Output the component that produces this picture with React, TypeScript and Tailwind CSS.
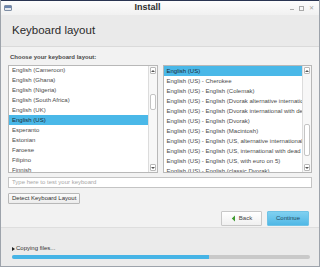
import React from "react";

const leftItems = [
  "English (Cameroon)",
  "English (Ghana)",
  "English (Nigeria)",
  "English (South Africa)",
  "English (UK)",
  "English (US)",
  "Esperanto",
  "Estonian",
  "Faroese",
  "Filipino",
  "Finnish",
];

const rightItems = [
  "English (US)",
  "English (US) - Cherokee",
  "English (US) - English (Colemak)",
  "English (US) - English (Dvorak alternative international no dead keys)",
  "English (US) - English (Dvorak international with dead keys)",
  "English (US) - English (Dvorak)",
  "English (US) - English (Macintosh)",
  "English (US) - English (US, alternative international)",
  "English (US) - English (US, international with dead keys)",
  "English (US) - English (US, with euro on 5)",
  "English (US) - English (classic Dvorak)",
];

function ScrollBar({ thumbTop, thumbHeight }: { thumbTop: number; thumbHeight: number }) {
  return (
    <div className="relative w-[9px] shrink-0 border-l border-[#dcdcdc] bg-[#f7f7f7]">
      {/* up arrow */}
      <div className="absolute left-[1px] top-[1px] flex h-[7px] w-[6px] items-center justify-center rounded-[1px] border border-[#b9b9b9] bg-white">
        <div className="h-0 w-0 border-x-[2px] border-b-[2px] border-x-transparent border-b-[#555]" />
      </div>
      {/* thumb */}
      <div
        className="absolute left-[1px] w-[6px] rounded-[2px] border border-[#c4c4c4] bg-white"
        style={{ top: thumbTop, height: thumbHeight }}
      />
      {/* down arrow */}
      <div className="absolute bottom-[1px] left-[1px] flex h-[7px] w-[6px] items-center justify-center rounded-[1px] border border-[#b9b9b9] bg-white">
        <div className="h-0 w-0 border-x-[2px] border-t-[2px] border-x-transparent border-t-[#555]" />
      </div>
    </div>
  );
}

function LayoutList({
  items,
  selected,
  offset,
  thumbTop,
  thumbHeight,
}: {
  items: string[];
  selected: number;
  offset: number;
  thumbTop: number;
  thumbHeight: number;
}) {
  return (
    <div className="flex h-[108px] w-[150px] overflow-hidden border border-[#b8b8b8] bg-white">
      <div className="min-w-0 flex-1 overflow-hidden">
        <div style={{ marginTop: offset }}>
          {items.map((item, i) => (
            <div
              key={item}
              className={
                i === selected
                  ? "flex h-[10px] items-center whitespace-nowrap bg-[#4ab8e8] pl-[3px] text-[#1d2a33]"
                  : "flex h-[10px] items-center whitespace-nowrap pl-[3px] text-[#4a4a4a]"
              }
            >
              {item}
            </div>
          ))}
        </div>
      </div>
      <ScrollBar thumbTop={thumbTop} thumbHeight={thumbHeight} />
    </div>
  );
}

export default function App() {
  return (
    <div
      className="flex h-[267px] w-[320px] flex-col overflow-hidden border-x border-b border-[#9da3ab] bg-[#f2f2f2] text-[6px] text-[#333]"
      style={{ fontFamily: '"Liberation Sans", Arial, sans-serif' }}
    >
      {/* title bar */}
      <div className="flex h-[15px] shrink-0 items-center border-t border-[#2a3552] bg-gradient-to-b from-[#fdfdfd] to-[#f1f1f1]">
        <div className="ml-[3px] flex h-[6px] w-[8px] flex-col overflow-hidden rounded-[1px] border border-[#7f8ea5] bg-[#e4e8ee]">
          <div className="h-[2px] bg-[#6b85ad]" />
        </div>
        <div className="flex-1 pr-[5px] text-center text-[9px] font-bold text-[#2e2e2e]">Install</div>
        <div className="mr-[5px] flex w-[26px] items-center justify-end gap-[5px] text-[6px] text-[#a5a5a5]">
          <span className="mt-[2px] block h-[1px] w-[4px] bg-[#aaa]" />
          <span className="block h-[5px] w-[5px] border border-[#aaa]" />
          <span className="leading-none">✕</span>
        </div>
      </div>

      {/* header */}
      <div className="flex h-[32px] shrink-0 items-center border-b border-[#dadada] bg-[#eaeaea] pl-[11px]">
        <span className="text-[11.5px] text-[#2b2b2b]">Keyboard layout</span>
      </div>

      {/* content */}
      <div className="flex flex-1 flex-col px-[7px] pt-[6px]">
        <div className="pl-[2px] text-[6px] font-bold text-[#4a4a4a]">Choose your keyboard layout:</div>
        <div className="mt-[3px] flex gap-[5px]">
          <LayoutList items={leftItems} selected={5} offset={-1} thumbTop={28} thumbHeight={16} />
          <LayoutList items={rightItems} selected={0} offset={0} thumbTop={58} thumbHeight={32} />
        </div>
        <div className="mt-[4px] flex h-[11px] items-center border border-[#c4c4c4] bg-white pl-[3px] text-[#a8a8a8]">
          Type here to test your keyboard
        </div>
        <div className="mt-[5px] flex">
          <div className="flex h-[11px] items-center rounded-[1px] border border-[#b8b8b8] bg-gradient-to-b from-[#fbfbfb] to-[#ececec] px-[3px] text-[#333]">
            Detect Keyboard Layout
          </div>
        </div>
        <div className="mt-[7px] flex justify-end gap-[5px] pr-[3px]">
          <div className="flex h-[15px] w-[41px] items-center justify-center gap-[3px] rounded-[1px] border border-[#c8c8c8] bg-gradient-to-b from-white to-[#f0f0f0] text-[#444]">
            <svg width="5" height="7" viewBox="0 0 5 7">
              <path d="M4 0.5 L0.8 3.5 L4 6.5 Z" fill="#3f9a2f" />
            </svg>
            Back
          </div>
          <div className="flex h-[15px] w-[42px] items-center justify-center rounded-[1px] border border-[#6fc3e6] bg-gradient-to-b from-[#7fd0f0] to-[#4fb8e6] text-[#1f4a60]">
            Continue
          </div>
        </div>
      </div>

      {/* progress */}
      <div className="flex h-[39px] shrink-0 flex-col border-t border-[#dedede] bg-[#ebebeb] px-[11px] pt-[16px]">
        <div className="flex items-center gap-[1px] text-[#333]">
          <span className="h-0 w-0 border-y-[2px] border-l-[3px] border-y-transparent border-l-[#222]" />
          Copying files...
        </div>
        <div className="mt-[2px] h-[4px] w-[298px] overflow-hidden rounded-full bg-[#c9c9c9]">
          <div className="h-full bg-[#46b4e6]" style={{ width: "66%" }} />
        </div>
      </div>
    </div>
  );
}
